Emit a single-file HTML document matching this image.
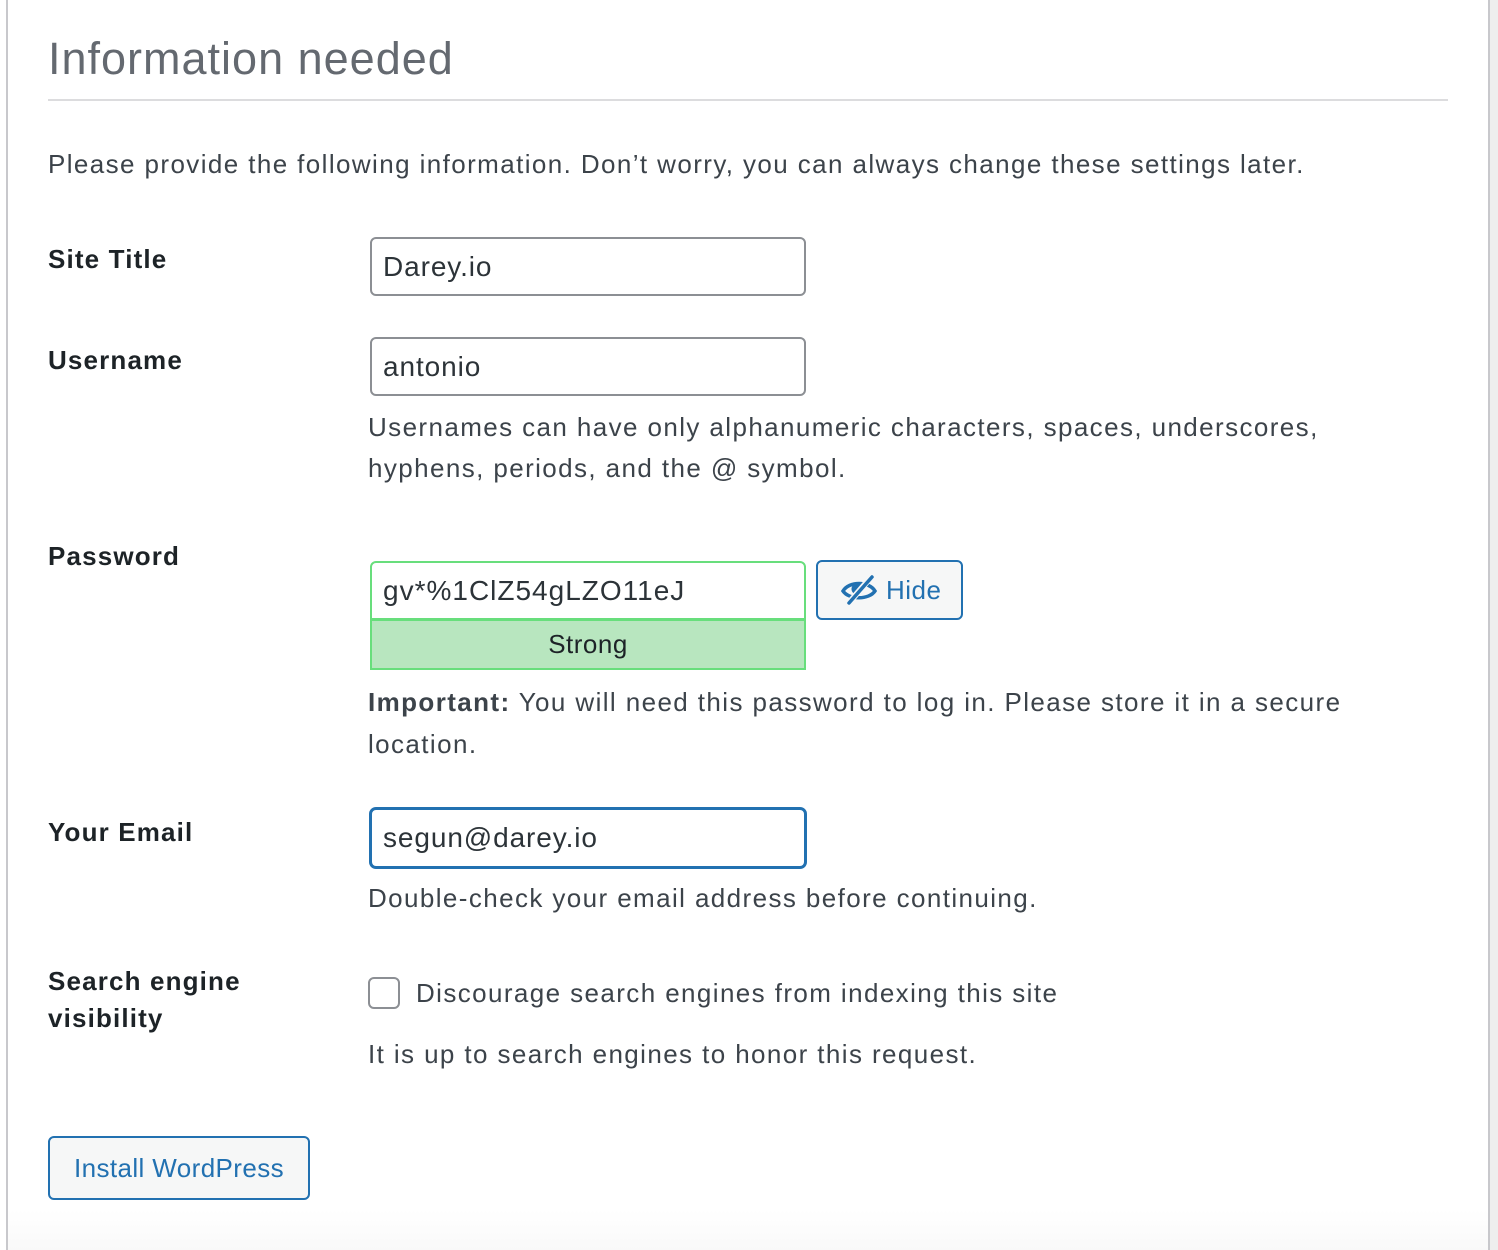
<!DOCTYPE html>
<html><head><meta charset="utf-8"><style>
html,body{margin:0;padding:0;}
body{width:1498px;height:1250px;position:relative;overflow:hidden;background:#fff;font-family:"Liberation Sans",sans-serif;color:#3c434a;}
.a{position:absolute;white-space:nowrap;line-height:1;}
.lbl{font-weight:bold;color:#1d2327;font-size:26px;letter-spacing:1.15px;}
.t{font-size:26px;letter-spacing:1.4px;}
.inp{position:absolute;box-sizing:border-box;border:2px solid #8c8f94;border-radius:6px;background:#fff;font-size:28px;color:#2c3338;padding-left:11px;display:flex;align-items:center;letter-spacing:0.9px;}
</style></head><body>
<div style="position:absolute;left:6px;top:0;width:2px;height:1250px;background:#c8c8cc"></div>
<div style="position:absolute;left:1488px;top:0;width:2px;height:1250px;background:#c8c8cc"></div>
<div style="position:absolute;left:1490px;top:0;width:8px;height:1250px;background:#eeeeee"></div>
<div style="position:absolute;left:8px;top:1210px;width:1480px;height:40px;background:linear-gradient(#fff,#f9f9f9)"></div>

<div class="a" style="left:48px;top:36px;font-size:45px;color:#646970;letter-spacing:1px">Information needed</div>
<div style="position:absolute;left:48px;top:99px;width:1400px;height:2px;background:#dcdcde"></div>
<div class="a t" style="left:48px;top:151px">Please provide the following information. Don’t worry, you can always change these settings later.</div>

<div class="a lbl" style="left:48px;top:246px">Site Title</div>
<div class="inp" style="left:370px;top:237px;width:436px;height:59px">Darey.io</div>

<div class="a lbl" style="left:48px;top:347px">Username</div>
<div class="inp" style="left:370px;top:337px;width:436px;height:59px">antonio</div>
<div class="a t" style="left:368px;top:414px">Usernames can have only alphanumeric characters, spaces, underscores,</div>
<div class="a t" style="left:368px;top:455px">hyphens, periods, and the @ symbol.</div>

<div class="a lbl" style="left:48px;top:543px">Password</div>
<div class="inp" style="left:370px;top:561px;width:436px;height:59px;border-color:#68de7c;border-radius:6px 6px 0 0;letter-spacing:1px">gv*%1ClZ54gLZO11eJ</div>
<div style="position:absolute;left:370px;top:619px;width:436px;height:51px;box-sizing:border-box;border:2px solid #68de7c;background:#b8e6bf;font-size:26px;color:#1d2327;display:flex;align-items:center;justify-content:center;letter-spacing:0.5px">Strong</div>
<div style="position:absolute;left:816px;top:560px;width:147px;height:60px;box-sizing:border-box;border:2px solid #2271b1;border-radius:6px;background:#f6f7f7;color:#2271b1;font-size:26px;display:flex;align-items:center;padding-left:22px;letter-spacing:0.5px">
<svg width="38" height="32" viewBox="0 0 38 32" style="margin-right:8px"><path d="M3 17 C9 7 29 7 35 17 C29 26 9 26 3 17Z" fill="none" stroke="#2271b1" stroke-width="3.5"/><circle cx="17" cy="15" r="5.5" fill="#2271b1"/><line x1="32" y1="2" x2="8" y2="30" stroke="#f6f7f7" stroke-width="6"/><line x1="32" y1="3" x2="9" y2="29" stroke="#2271b1" stroke-width="3.5" stroke-linecap="round"/></svg>Hide</div>
<div class="a t" style="left:368px;top:689px"><b style="color:#3c434a">Important:</b> You will need this password to log in. Please store it in a secure</div>
<div class="a t" style="left:368px;top:731px">location.</div>

<div class="a lbl" style="left:48px;top:819px">Your Email</div>
<div class="inp" style="left:369px;top:807px;width:438px;height:62px;border:3px solid #2271b1;border-radius:7px;padding-left:11px">segun@darey.io</div>
<div class="a t" style="left:368px;top:885px">Double-check your email address before continuing.</div>

<div class="a lbl" style="left:48px;top:968px">Search engine</div>
<div class="a lbl" style="left:48px;top:1005px">visibility</div>
<div style="position:absolute;left:368px;top:977px;width:32px;height:32px;box-sizing:border-box;border:2px solid #8c8f94;border-radius:6px;background:#fff"></div>
<div class="a t" style="left:416px;top:980px">Discourage search engines from indexing this site</div>
<div class="a t" style="left:368px;top:1041px">It is up to search engines to honor this request.</div>

<div style="position:absolute;left:48px;top:1136px;width:262px;height:64px;box-sizing:border-box;border:2px solid #2271b1;border-radius:6px;background:#f6f7f7;color:#2271b1;font-size:26px;display:flex;align-items:center;justify-content:center;letter-spacing:0.4px">Install WordPress</div>
</body></html>
